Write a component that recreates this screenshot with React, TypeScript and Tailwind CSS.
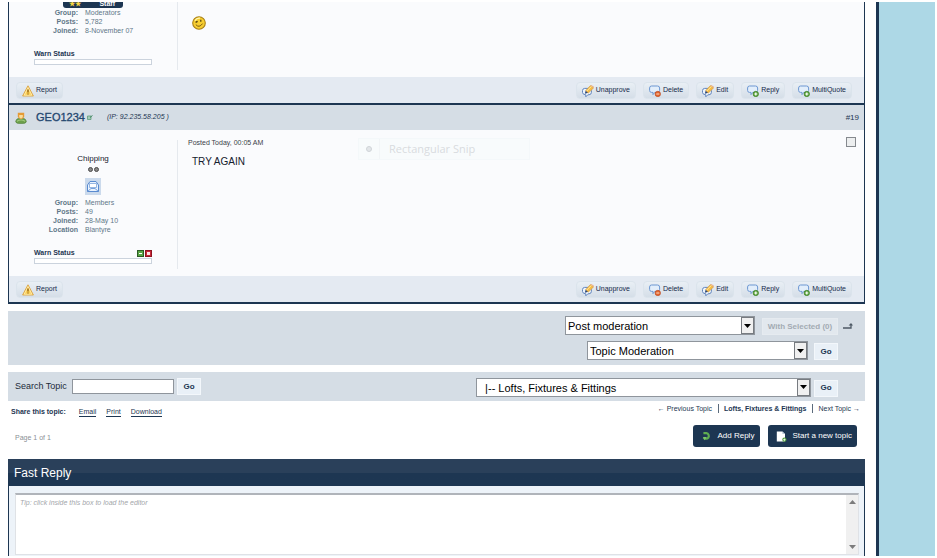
import React, { useState } from 'react';

type IconName = 'edit' | 'delete' | 'reply';

interface PostAction {
  label: string;
  icon: IconName;
}

interface Detail {
  label: string;
  value: string;
}

const POST_ACTIONS: PostAction[] = [
  { label: 'Unapprove', icon: 'edit' },
  { label: 'Delete', icon: 'delete' },
  { label: 'Edit', icon: 'edit' },
  { label: 'Reply', icon: 'reply' },
  { label: 'MultiQuote', icon: 'reply' },
];

function WarningIcon() {
  return (
    <svg className="h-3 w-3 shrink-0" viewBox="0 0 12 12">
      <path d="M6 0.8 L11.4 11 H0.6 Z" fill="#fbcf55" stroke="#dba850" strokeWidth="1" strokeLinejoin="round" />
      <path d="M6 2.6 L9.8 10.2 H2.2 Z" fill="none" stroke="#fff0b8" strokeWidth="0.8" />
      <path d="M6 4.6 V7.6 M6 8.4 V9.4" stroke="#8a5a12" strokeWidth="1.3" />
    </svg>
  );
}

function ActionIcon({ name }: { name: IconName }) {
  if (name === 'edit') {
    return (
      <svg className="h-3 w-3 shrink-0" viewBox="0 0 12 12">
        <path d="M2.6 3.4 H7.4 Q9.4 3.6 9.4 5.6 V7.4 Q9.4 9.6 7 9.8 H5.8 L3.8 11.8 V9.8 Q0.5 9.6 0.5 7.4 V5.6 Q0.5 3.6 2.6 3.4 Z" fill="#eef5fd" stroke="#6386bd" strokeWidth="1" />
        <path d="M2.8 8.8 L3.7 5.6 L6.4 7.8 Z" fill="#2f4a78" />
        <path d="M3.7 5.6 L8.4 0.6 L11.6 2.9 L6.4 8 Z" fill="#f6bd48" stroke="#c88d38" strokeWidth="0.5" />
        <path d="M8.4 0.6 L9.4 0 L12 1.8 L11.6 2.9 Z" fill="#e8b08c" />
        <path d="M4.8 6 L9.4 1.4" stroke="#fde9a4" strokeWidth="1" />
      </svg>
    );
  }
  return (
    <svg className="h-3 w-3 shrink-0" viewBox="0 0 12 12">
      <path d="M2.5 1 H8.5 Q10.6 1 10.6 3 V5.4 Q10.6 7.4 8.5 7.4 H5.8 L4 9.6 V7.4 H2.5 Q0.6 7.4 0.6 5.4 V3 Q0.6 1 2.5 1 Z" fill="#e2eefb" stroke="#6c97d2" strokeWidth="1" />
      {name === 'delete' ? (
        <>
          <circle cx="8.8" cy="9" r="2.7" fill="#e2662e" stroke="#b8431b" strokeWidth="0.6" />
          <path d="M7.3 9 H10.3" stroke="#fbd9c6" strokeWidth="1" />
        </>
      ) : (
        <>
          <circle cx="8.8" cy="9" r="2.7" fill="#58a23a" stroke="#38791f" strokeWidth="0.6" />
          <path d="M7.3 9 H10.3 M8.8 7.5 V10.5" stroke="#fff" strokeWidth="1.1" />
        </>
      )}
    </svg>
  );
}

function UserIcon() {
  return (
    <svg className="h-3 w-3 shrink-0" viewBox="0 0 12 12">
      <path d="M0.7 10 Q0.8 6 6 6 Q11.2 6 11.3 10 Q11 11.6 6 11.6 Q1 11.6 0.7 10 Z" fill="#6c9f4b" stroke="#4f7e3b" strokeWidth="0.6" />
      <path d="M2 9.4 Q3 8 6 8 Q9 8 10 9.4" fill="none" stroke="#a5cd80" strokeWidth="1.2" />
      <path d="M2.8 0.8 H9.2 V4.6 Q8.6 7.2 6 7.2 Q3.4 7.2 2.8 4.6 Z" fill="#e59a35" />
      <path d="M4.2 3 H7.8 V5 Q7.4 6.4 6 6.4 Q4.6 6.4 4.2 5 Z" fill="#f7dd9c" />
    </svg>
  );
}

function Smiley() {
  return (
    <svg className="h-[14px] w-[14px]" viewBox="0 0 14 14">
      <circle cx="7" cy="7" r="6.3" fill="#f7ce30" stroke="#a98019" strokeWidth="1.1" />
      <path d="M3 4.6 Q4.5 1.8 8 2.2" stroke="#fff6b0" strokeWidth="1.2" fill="none" />
      <path d="M3.6 6.4 L5.6 5.4 M8.8 3.8 V5.8" stroke="#4b3a0c" strokeWidth="1.2" />
      <path d="M3.8 8.6 Q7 12.4 10.6 7.6" stroke="#7c5a10" strokeWidth="1" fill="none" />
    </svg>
  );
}

function PostFooter() {
  const button =
    'flex h-[17px] items-center gap-[2px] rounded-sm border border-[#dbe4ec] bg-linear-to-b from-[#e9eff5] to-[#d5dee8] px-[5px] pt-px text-[7px] text-[#15294a] cursor-pointer';
  return (
    <div className="flex h-[26px] items-center justify-between bg-[#e4eaf2] pl-[7px] pr-3">
      <button type="button" className={button}>
        <WarningIcon />
        Report
      </button>
      <div className="flex gap-[7px]">
        {POST_ACTIONS.map((action) => (
          <button key={action.label} type="button" className={button}>
            <ActionIcon name={action.icon} />
            {action.label}
          </button>
        ))}
      </div>
    </div>
  );
}

function AuthorDetails({ details }: { details: Detail[] }) {
  return (
    <dl className="grid grid-cols-[69px_1fr] gap-x-[7px] text-[7px] leading-[9px] text-[#5f7788]">
      {details.map((detail) => (
        <React.Fragment key={detail.label}>
          <dt className="text-right font-bold">{detail.label}</dt>
          <dd>{detail.value}</dd>
        </React.Fragment>
      ))}
    </dl>
  );
}

function WarnStatus({ controls }: { controls?: boolean }) {
  return (
    <div className="mt-[15px] mb-[5px] ml-[25px] w-[118px]">
      <div className="flex h-[9px] items-center justify-between text-[7px] font-bold text-[#1d3652]">
        <span>Warn Status</span>
        {controls && (
          <span className="flex gap-px">
            <button type="button" aria-label="Decrease warn level" className="flex h-[7px] w-[7px] items-center justify-center border border-[#2b5a25] bg-[#58a544]">
              <span className="h-px w-[3px] bg-white" />
            </button>
            <button type="button" aria-label="Increase warn level" className="flex h-[7px] w-[7px] items-center justify-center border border-[#8e1420] bg-[#c8283a]">
              <span className="h-[3px] w-[3px] bg-[#ffe3e3]" />
            </button>
          </span>
        )}
      </div>
      <div className="h-[6px] border border-[#cbd3dd] bg-white" />
    </div>
  );
}

interface SelectBoxProps {
  label: string;
  option: string;
  className: string;
}

function SelectBox({ label, option, className }: SelectBoxProps) {
  return (
    <div className={`relative ${className}`}>
      <select
        aria-label={label}
        className="block h-[19px] w-full appearance-none border border-[#8f959c] bg-white pt-[2px] pl-[2px] pr-4 text-[11px] leading-[15px] text-black"
      >
        <option>{option}</option>
      </select>
      <span className="pointer-events-none absolute top-px right-px flex h-[17px] w-[13px] items-center justify-center border border-[#777b80] bg-[#f0f0f0]">
        <svg className="h-1 w-[7px]" viewBox="0 0 7 4">
          <path d="M0 0 H7 L3.5 4 Z" fill="#000" />
        </svg>
      </span>
    </div>
  );
}

function GoButton() {
  return (
    <button type="submit" className="h-[17px] w-6 border border-[#f3f7fb] bg-[#e9f0f7] text-[8px] font-bold text-[#1d3652] cursor-pointer">
      Go
    </button>
  );
}

export default function App(): React.JSX.Element {
  const [selected, setSelected] = useState<boolean>(false);
  const [reply, setReply] = useState<string>('');

  return (
    <div className="min-h-screen overflow-hidden bg-white py-[2px] pr-[2px] font-['Liberation_Sans',Arial,sans-serif]">
      <div className="flex">
        <main className="min-w-0 flex-1 pr-[11px] pl-2">
          <section className="border-x border-b-2 border-[#1d3652] bg-[#fafbfd]">
            <article>
              <div className="flex overflow-hidden">
                <div className="mb-[7px] w-[169px] shrink-0 border-r border-[#e5e9ee]">
                  <div className="ml-[54px] flex h-[6px] w-[60px] items-end justify-between rounded-b-[3px] bg-[#1d3652] pr-2 pl-[6px] text-[7px] leading-[8px] font-bold text-white">
                    <span className="text-[#f5d442]">★★</span>
                    <span>Staff</span>
                  </div>
                  <AuthorDetails
                    details={[
                      { label: 'Group:', value: 'Moderators' },
                      { label: 'Posts:', value: '5,782' },
                      { label: 'Joined:', value: '8-November 07' },
                    ]}
                  />
                  <WarnStatus />
                </div>
                <div className="pt-[14px] pl-[14px]">
                  <Smiley />
                </div>
              </div>
              <PostFooter />
            </article>

            <article className="border-t-2 border-[#1d3652]">
              <header className="flex h-[25px] items-center bg-[#d5dde5] pr-[5px] pl-[6px] text-[#1d3652]">
                <UserIcon />
                <h3 className="ml-[9px] text-[11px] text-[#23466f] [-webkit-text-stroke:0.3px_#23466f]">GEO1234</h3>
                <svg className="ml-[2px] h-[5px] w-[6px]" viewBox="0 0 6 5">
                  <path d="M0.5 1 H4 V4.5 H0.5 Z" fill="#a7cdb8" stroke="#5f9c7c" strokeWidth="0.8" />
                  <path d="M3 2.5 L5.5 0.4" stroke="#3f8560" strokeWidth="1" />
                </svg>
                <span className="ml-[14px] text-[7px] italic">(IP: 92.235.58.205 )</span>
                <a href="#19" className="ml-auto text-[8px]">
                  #19
                </a>
              </header>
              <div className="flex">
                <div className="mt-[10px] mb-[7px] w-[169px] shrink-0 border-r border-[#e5e9ee] pt-[14px]">
                  <p className="text-center text-[8px] leading-[10px] text-[#15202e]">Chipping</p>
                  <div className="mt-[3px] flex justify-center gap-px">
                    <span className="h-[5px] w-[5px] rounded-full border border-[#4a4a4a] bg-[#8a8a8a]" />
                    <span className="h-[5px] w-[5px] rounded-full border border-[#4a4a4a] bg-[#8a8a8a]" />
                  </div>
                  <svg className="mx-auto mt-[6px] mb-[3px] h-[17px] w-4" viewBox="0 0 16 17">
                    <rect width="16" height="17" fill="#cbdaec" />
                    <path d="M2.5 7 L5 3.5 H11 L13.5 7 V13.5 H2.5 Z" fill="#eaf3fe" stroke="#5a8bd0" strokeWidth="1" />
                    <path d="M4.5 5.5 H11.5 V9.5 H4.5 Z" fill="#fff" stroke="#7ea6dc" strokeWidth="0.8" />
                    <path d="M2.5 13.5 L6 10.5 H10 L13.5 13.5" fill="none" stroke="#5a8bd0" strokeWidth="0.8" />
                  </svg>
                  <AuthorDetails
                    details={[
                      { label: 'Group:', value: 'Members' },
                      { label: 'Posts:', value: '49' },
                      { label: 'Joined:', value: '28-May 10' },
                      { label: 'Location', value: 'Blantyre' },
                    ]}
                  />
                  <WarnStatus controls />
                </div>
                <div className="relative flex-1 pt-2 pl-[10px]">
                  <p className="text-[7px] leading-[9px] text-[#3a4148]">Posted Today, 00:05 AM</p>
                  <p className="mt-[9px] pl-1 text-[10px] leading-3 text-[#15202e]">TRY AGAIN</p>
                  <div className="absolute top-2 left-[180px] flex h-[22px] w-[172px] items-center border border-[#f4f8fa] bg-[#f8fbfc] font-['Open_Sans',sans-serif] text-[11px] text-[#d9dcdf]">
                    <span className="mx-[7px] h-[6px] w-[6px] rounded-full border border-[#d0d4d8] bg-[#e3e6e9]" />
                    <span className="h-full w-px bg-[#f2f5f7]" />
                    <span className="ml-[9px]">Rectangular Snip</span>
                  </div>
                </div>
                <input
                  type="checkbox"
                  aria-label="Select post"
                  checked={selected}
                  onChange={(e) => setSelected(e.target.checked)}
                  className="mt-[7px] mr-2 h-[10px] w-[10px] appearance-none border border-[#85898e] bg-[#eceeef] checked:bg-[#1d3652]"
                />
              </div>
              <PostFooter />
            </article>
          </section>

          <section className="mt-[7px] bg-[#d5dde5] pt-[5px] pb-[5px]">
            <form className="flex items-end justify-end pr-3" onSubmit={(e) => e.preventDefault()}>
              <SelectBox label="Post moderation" option="Post moderation" className="w-[190px]" />
              <button type="submit" disabled className="ml-[7px] h-[17px] w-[76px] border border-[#e6ebf0] bg-[#e2e8ee] text-[8px] font-bold text-[#a3abb3]">
                With Selected (0)
              </button>
              <svg className="mb-[6px] ml-[5px] h-[6px] w-[10px]" viewBox="0 0 10 6">
                <path d="M0 5 H8 V1.5" fill="none" stroke="#4d5864" strokeWidth="1.3" />
                <path d="M5.6 2.6 L8 0 L10 2.6 Z" fill="#4d5864" />
              </svg>
            </form>
            <form className="mt-[6px] flex items-end justify-end gap-[6px] pr-[27px]" onSubmit={(e) => e.preventDefault()}>
              <SelectBox label="Topic moderation" option="Topic Moderation" className="w-[221px]" />
              <GoButton />
            </form>
          </section>

          <section className="mt-[7px] flex h-[29px] items-center justify-between bg-[#d5dde5] pr-[27px] pl-[7px]">
            <form className="flex items-center" onSubmit={(e) => e.preventDefault()}>
              <label htmlFor="search-topic" className="w-[57px] text-[9px] text-[#1c2b3a]">
                Search Topic
              </label>
              <input id="search-topic" type="text" className="mr-[3px] h-[15px] w-[102px] border border-[#8f959c] bg-white px-1 text-[9px]" />
              <GoButton />
            </form>
            <form className="flex items-end gap-[3px] pt-px" onSubmit={(e) => e.preventDefault()}>
              <SelectBox label="Jump to forum" option={'\u00a0\u00a0|-- Lofts, Fixtures & Fittings'} className="w-[335px]" />
              <GoButton />
            </form>
          </section>

          <div className="mt-[3px] flex h-[17px] justify-between pr-[5px] pl-[3px] text-[7px] text-[#1d3652]">
            <div className="flex items-center gap-[10px]">
              <span className="mr-[3px] font-bold">Share this topic:</span>
              <a href="#email" className="border-b border-[#1d3652] leading-[8px]">Email</a>
              <a href="#print" className="border-b border-[#1d3652] leading-[8px]">Print</a>
              <a href="#download" className="border-b border-[#1d3652] leading-[8px]">Download</a>
            </div>
            <nav className="flex h-[9px] items-center leading-[9px]">
              <a href="#previous">← Previous Topic</a>
              <a href="#forum" className="mx-[6px] border-x border-[#5b6b7c] px-[5px] font-bold">
                Lofts, Fixtures &amp; Fittings
              </a>
              <a href="#next">Next Topic →</a>
            </nav>
          </div>

          <div className="mt-1 flex items-end justify-between pr-2 pl-[7px]">
            <span className="pb-1 text-[7px] text-[#8b9096]">Page 1 of 1</span>
            <div className="flex gap-2">
              <button type="button" className="flex h-[22px] items-center gap-[6px] rounded-[3px] bg-[#1d3652] pr-[6px] pl-2 text-[8px] text-white cursor-pointer">
                <svg className="h-[10px] w-[10px]" viewBox="0 0 10 10">
                  <path d="M2.4 2.2 H5.4 A2.8 2.8 0 1 1 2.6 6.4" fill="none" stroke="#5fae50" strokeWidth="2.2" />
                  <path d="M2 6 H5.8 L3.6 9.2 Z" fill="#7cc66b" />
                </svg>
                Add Reply
              </button>
              <button type="button" className="flex h-[22px] items-center gap-[5px] rounded-[3px] bg-[#1d3652] pr-[5px] pl-2 text-[8px] text-white cursor-pointer">
                <svg className="h-[11px] w-[11px]" viewBox="0 0 11 11">
                  <path d="M0.8 0.5 H6.4 L9 3 V10.5 H0.8 Z" fill="#fff" />
                  <path d="M6.4 0.5 V3 H9 Z" fill="#b9c8d8" />
                  <circle cx="8.4" cy="8.7" r="2.1" fill="#4e9b3a" />
                  <path d="M7.2 8.7 H9.6 M8.4 7.5 V9.9" stroke="#fff" strokeWidth="0.8" />
                </svg>
                Start a new topic
              </button>
            </div>
          </div>

          <section className="mt-3">
            <h2 className="flex h-[27px] items-center bg-linear-to-b from-[#2a405a] from-50% to-[#1d3652] to-50% pl-[6px] text-[12px] text-white">
              Fast Reply
            </h2>
            <div className="border-x border-[#1d3652] bg-[#edf3f9] pt-[7px] pr-[5px] pb-px pl-[6px]">
              <div className="flex h-[62px] border border-t-2 border-[#dfe2e6] border-t-[#b0b4ba] bg-white">
                <textarea
                  aria-label="Fast reply"
                  placeholder="Tip: click inside this box to load the editor"
                  value={reply}
                  onChange={(e) => setReply(e.target.value)}
                  className="min-w-0 flex-1 resize-none px-1 pt-[3px] text-[7px] leading-[9px] placeholder:italic placeholder:text-[#a3a6aa] placeholder:opacity-100"
                />
                <div className="flex w-3 flex-col items-center justify-between bg-[#f0f0f0] py-[5px]">
                  <svg className="h-1 w-[7px]" viewBox="0 0 7 4">
                    <path d="M0 4 H7 L3.5 0 Z" fill="#7c7c7c" />
                  </svg>
                  <svg className="h-1 w-[7px]" viewBox="0 0 7 4">
                    <path d="M0 0 H7 L3.5 4 Z" fill="#7c7c7c" />
                  </svg>
                </div>
              </div>
            </div>
          </section>
        </main>
        <aside className="w-[59px] shrink-0 border-l-[3px] border-[#1d3652] bg-[#add8e6]" />
      </div>
    </div>
  );
}
